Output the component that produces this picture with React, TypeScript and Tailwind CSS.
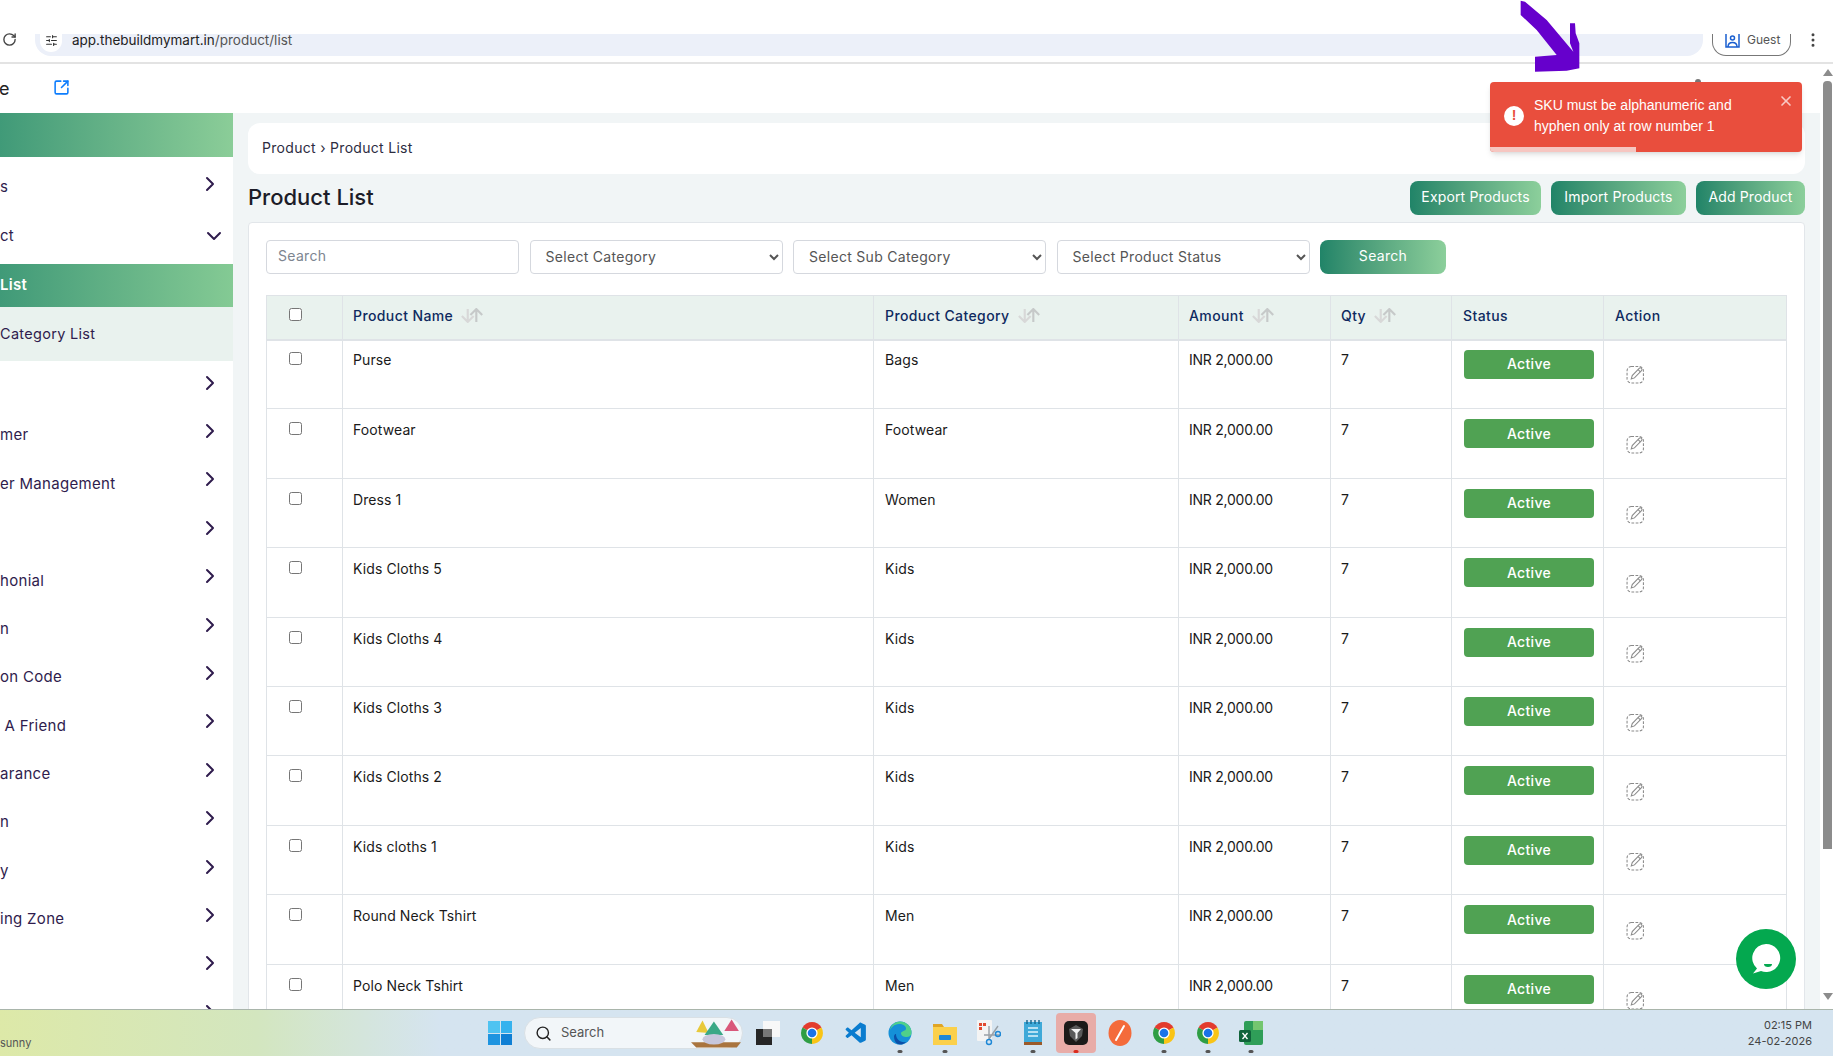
import type { ReactNode } from 'react';
import { ChevronDown, ChevronRight, EllipsisVertical, RotateCw, Search, SlidersHorizontal, SquareArrowOutUpRight, X } from 'lucide-react';
import { VscVscode } from 'react-icons/vsc';

const products = [
  { name: 'Purse', category: 'Bags' },
  { name: 'Footwear', category: 'Footwear' },
  { name: 'Dress 1', category: 'Women' },
  { name: 'Kids Cloths 5', category: 'Kids' },
  { name: 'Kids Cloths 4', category: 'Kids' },
  { name: 'Kids Cloths 3', category: 'Kids' },
  { name: 'Kids Cloths 2', category: 'Kids' },
  { name: 'Kids cloths 1', category: 'Kids' },
  { name: 'Round Neck Tshirt', category: 'Men' },
  { name: 'Polo Neck Tshirt', category: 'Men' },
];

const menuRows = ['', 'mer', 'er Management', '', 'honial', 'n', 'on Code', ' A Friend', 'arance', 'n', 'y', 'ing Zone', '', ''];

function SortIcon() {
  return (
    <svg width="23" height="15" viewBox="0 0 21 14" fill="none" strokeWidth="2" className="shrink-0">
      <path d="M7 1v12M1.5 7.5L7 13l5.500-5.500" stroke="#d8d8d8" />
      <path d="M15 13V1M9.500 6.500L15 1l5.500 5.500" stroke="#c6c9c9" />
    </svg>
  );
}

function EditIcon() {
  return (
    <svg width="19" height="19" viewBox="0 0 18 18" fill="none" stroke="#8a8a8a" strokeWidth="1">
      <rect x="1" y="1.5" width="15.5" height="15.5" rx="4" strokeDasharray="2.600 1.400" />
      <path d="M5 13.200l.9-3.200 6.600-6.800a1.500 1.500 0 0 1 2.200 2.100L8 12.200z" fill="#fff" />
      <path d="M11.500 4.400l2.100 2.100" />
    </svg>
  );
}

function ChromeIcon() {
  return (
    <svg width="24" height="24" viewBox="0 0 24 24">
      <path d="M12 12L2.500 6.500A11 11 0 0 1 21.500 6.500Z" fill="#e33b2e" />
      <path d="M12 12L2.500 6.500A11 11 0 0 0 12 23Z" fill="#2f9e44" />
      <path d="M12 12L12 23A11 11 0 0 0 21.500 6.500Z" fill="#f9c416" />
      <circle cx="12" cy="12" r="5.600" fill="#fff" />
      <circle cx="12" cy="12" r="4.300" fill="#1a73e8" />
    </svg>
  );
}

function WindowsIcon() {
  return (
    <div className="grid grid-cols-2 gap-[1px] w-[24px] h-[24px]">
      <div className="bg-[#4fc3f1]" />
      <div className="bg-[#36b2ee]" />
      <div className="bg-[#1e94e0]" />
      <div className="bg-[#0f7fd4]" />
    </div>
  );
}

function TaskItem({ className, dot, children }: { className: string; dot?: string; children: ReactNode }) {
  return (
    <div className={`relative h-[46px] flex items-center justify-center ${className}`}>
      {children}
      {dot && <span className={`absolute bottom-[3px] left-1/2 -translate-x-1/2 w-[5px] h-[3px] rounded-full ${dot}`} />}
    </div>
  );
}

function TaskbarIcons() {
  return (
    <>
      <TaskItem className="w-[44px]">
        <svg width="24" height="24" viewBox="0 0 24 24">
          <rect x="7" y="0" width="17" height="16" fill="#f8f8f8" />
          <rect x="0" y="8" width="16" height="16" fill="#262626" />
          <rect x="7" y="8" width="9" height="8" fill="#777" />
        </svg>
      </TaskItem>
      <TaskItem className="w-[44px]"><ChromeIcon /></TaskItem>
      <TaskItem className="w-[44px]"><VscVscode size={25} className="text-[#0a7ccf]" /></TaskItem>
      <TaskItem className="w-[44px]" dot="bg-[#555]">
        <svg width="24" height="24" viewBox="0 0 24 24">
          <circle cx="12" cy="12" r="11.500" fill="#1590d8" />
          <path d="M12 .5A11.500 11.500 0 0 1 23.500 12c0 3-3 4.500-6 4-3-.5-4.500-2-4.500-3.500 0-3 5-2 5-5C18 5 15 3 11 3 6 3 3 7 2 9 3 4 7 .5 12 .5z" fill="#4fd08a" />
          <path d="M8 13c0 5 4 9 10 8-2 2-4 2.500-6 2.500-3 0-6-3-6-8 0-1 1-3 2-2.500z" fill="#0b4fa8" />
        </svg>
      </TaskItem>
      <TaskItem className="w-[45px]" dot="bg-[#555]">
        <svg width="24" height="24" viewBox="0 0 24 24">
          <path d="M0 3h9l2 3H0z" fill="#e0a526" />
          <rect x="0" y="6" width="24" height="18" fill="#fbd04b" />
          <rect x="6" y="14" width="12" height="5" rx="1" fill="#1e88d6" />
        </svg>
      </TaskItem>
      <TaskItem className="w-[44px]">
        <svg width="24" height="26" viewBox="0 0 24 26">
          <rect x="0" y="0" width="15" height="21" rx="1" fill="#f4f4f4" />
          <rect x="2" y="3" width="3" height="3" fill="#e2492f" />
          <rect x="6" y="3" width="3" height="3" fill="#e2492f" />
          <rect x="2" y="7" width="3" height="3" fill="#e2492f" />
          <path d="M12 6v13M21 6L12 19M7 15h17" stroke="#9aa0a6" strokeWidth="1.400" />
          <circle cx="12" cy="22" r="2.500" fill="none" stroke="#1e88d6" strokeWidth="1.400" />
          <circle cx="21" cy="14" r="2.500" fill="none" stroke="#1e88d6" strokeWidth="1.400" />
        </svg>
      </TaskItem>
      <TaskItem className="w-[43px]" dot="bg-[#555]">
        <svg width="20" height="26" viewBox="0 0 20 26">
          <rect x="1" y="2" width="18" height="20" fill="#3fa9d8" />
          <path d="M4 0v4M8 0v4M12 0v4M16 0v4" stroke="#14648c" strokeWidth="1.400" />
          <path d="M5 8h10M5 12h10M5 16h10" stroke="#dff3fb" strokeWidth="1.600" />
          <rect x="1" y="22" width="18" height="3" fill="#9b5a2a" />
        </svg>
      </TaskItem>
      <TaskItem className="w-[44px]" dot="bg-[#d92b1f]">
        <div className="w-[40px] h-[40px] rounded bg-[#e8aca8] flex items-center justify-center">
          <svg width="24" height="24" viewBox="0 0 24 24">
            <rect width="24" height="24" rx="5" fill="#1c1a19" />
            <path d="M12 4l7 4-1 7-6 6-6-6-1-7z" fill="#5a5a5a" />
            <path d="M7 8h10l-3.500 4v5l-2 1.500V12z" fill="#f2f2f2" />
          </svg>
        </div>
      </TaskItem>
      <TaskItem className="w-[44px]">
        <svg width="24" height="26" viewBox="0 0 24 26">
          <ellipse cx="12" cy="13" rx="11.500" ry="13" fill="#f46b3b" />
          <path d="M8 20L16 6" stroke="#fff" strokeWidth="2" strokeLinecap="round" />
        </svg>
      </TaskItem>
      <TaskItem className="w-[44px]" dot="bg-[#555]"><ChromeIcon /></TaskItem>
      <TaskItem className="w-[43px]" dot="bg-[#555]"><ChromeIcon /></TaskItem>
      <TaskItem className="w-[44px]" dot="bg-[#555]">
        <svg width="24" height="24" viewBox="0 0 24 24">
          <rect x="5" y="0" width="19" height="24" rx="2" fill="#2f9e58" />
          <rect x="14" y="0" width="10" height="9" fill="#74c66f" />
          <rect x="0" y="9" width="12" height="12" rx="1.500" fill="#10633a" />
          <path d="M3.500 12l5 6M8.500 12l-5 6" stroke="#fff" strokeWidth="1.300" />
        </svg>
      </TaskItem>
    </>
  );
}

function Sidebar() {
  return (
    <aside className="w-[233px] bg-white shrink-0 overflow-hidden text-[15px] tracking-[0.3px] text-[#2f1c4d]">
      <div className="h-[44px] bg-gradient-to-r from-[#409a78] to-[#8bcd98]" />
      <div className="h-[3px]" />
      <div className="h-[48px] flex items-center justify-between pr-[11px]">
        <span className="pt-[6px]">s</span>
        <ChevronRight size={24} />
      </div>
      <div className="h-[56px] flex items-center justify-between pr-[7px]">
        <span className="pt-[1px]">ct</span>
        <ChevronDown size={24} />
      </div>
      <div className="h-[43px] flex items-center bg-gradient-to-r from-[#409a78] to-[#84ca94] text-white font-semibold">List</div>
      <div className="h-[54px] flex items-center bg-[#e9f2ee] text-[14.500px]">Category List</div>
      {menuRows.map((label, i) => (
        <div key={i} className="h-[48.400px] flex items-center justify-between pr-[11px]">
          <span className="pt-[4px] whitespace-pre">{label}</span>
          <ChevronRight size={24} className="mb-[5px] shrink-0" />
        </div>
      ))}
    </aside>
  );
}

function ProductTable() {
  return (
    <table className="w-[1520px] table-fixed border-collapse text-[14px] tracking-[0.1px] text-[#1a1a1a]">
      <colgroup>
        <col className="w-[76px]" />
        <col className="w-[531px]" />
        <col className="w-[305px]" />
        <col className="w-[152px]" />
        <col className="w-[121px]" />
        <col className="w-[152px]" />
        <col className="w-[183px]" />
      </colgroup>
      <thead>
        <tr className="h-[44px] bg-[#e9f2ee] text-left text-[#0f2a5f] tracking-[0.4px] border-b-2 border-[#dfe3e7]">
          <th className="border border-[#dfe3e7] pl-[22px] pb-[5px] font-medium"><input type="checkbox" className="block w-[13px] h-[13px]" /></th>
          <th className="border border-[#dfe3e7] pl-[10px] pb-[3px] font-medium"><div className="flex items-center gap-[7px]">Product Name <SortIcon /></div></th>
          <th className="border border-[#dfe3e7] pl-[11px] pb-[3px] font-medium"><div className="flex items-center gap-[7px]">Product Category <SortIcon /></div></th>
          <th className="border border-[#dfe3e7] pl-[10px] pb-[3px] font-medium"><div className="flex items-center gap-[7px]">Amount <SortIcon /></div></th>
          <th className="border border-[#dfe3e7] pl-[10px] pb-[3px] font-medium"><div className="flex items-center gap-[7px]">Qty <SortIcon /></div></th>
          <th className="border border-[#dfe3e7] pl-[11px] pb-[3px] font-medium">Status</th>
          <th className="border border-[#dfe3e7] pl-[11px] pb-[3px] font-medium">Action</th>
        </tr>
      </thead>
      <tbody>
        {products.map((p, i) => (
          <tr key={p.name} className="h-[69.400px] align-top">
            <td className={`border border-[#dfe3e7] pl-[22px] ${i === 0 ? 'pt-[11px]' : 'pt-[13px]'}`}><input type="checkbox" className="block w-[13px] h-[13px]" /></td>
            <td className={`border border-[#dfe3e7] pl-[10px] leading-[21px] ${i === 0 ? 'pt-[8px]' : 'pt-[10px]'}`}>{p.name}</td>
            <td className={`border border-[#dfe3e7] pl-[11px] leading-[21px] ${i === 0 ? 'pt-[8px]' : 'pt-[10px]'}`}>{p.category}</td>
            <td className={`border border-[#dfe3e7] pl-[10px] leading-[21px] tracking-[-0.25px] ${i === 0 ? 'pt-[8px]' : 'pt-[10px]'}`}>INR 2,000.00</td>
            <td className={`border border-[#dfe3e7] pl-[10px] leading-[21px] ${i === 0 ? 'pt-[8px]' : 'pt-[10px]'}`}>7</td>
            <td className={`border border-[#dfe3e7] pl-[12px] ${i === 0 ? 'pt-[9px]' : 'pt-[10px]'}`}>
              <div className="w-[130px] h-[29px] pb-[1px] rounded-[4px] bg-[#50a253] text-white font-medium tracking-[0.3px] flex items-center justify-center">Active</div>
            </td>
            <td className={`border border-[#dfe3e7] pl-[22px] ${i === 0 ? 'pt-[24px]' : 'pt-[26px]'}`}><EditIcon /></td>
          </tr>
        ))}
      </tbody>
    </table>
  );
}

export default function App() {
  return (
    <div className="relative w-[1833px] h-[1056px] overflow-hidden bg-white flex flex-col font-[Inter,sans-serif]">
      {/* browser chrome */}
      <div className="h-[64px] shrink-0 pt-[34px] border-b-2 border-[#e3e3e3] flex items-start">
        <div className="w-[35px] shrink-0 pl-[2px] -mt-[2px]">
          <RotateCw size={15} strokeWidth={2.200} className="text-[#444]" />
        </div>
        <div className="w-[1668px] h-[22px] bg-[#ecf0f9] rounded-b-[16px] flex items-start">
          <div className="ml-[5px] w-[22px] h-[18px] bg-white rounded-b-full flex justify-center">
            <SlidersHorizontal size={13} className="text-[#333]" />
          </div>
          <span className="ml-[10px] text-[13.500px] leading-[12px] text-[#222]">app.thebuildmymart.in<span className="text-[#555]">/product/list</span></span>
        </div>
        <div className="ml-[9px] w-[79px] h-[22px] border border-t-0 border-[#777] rounded-b-[14px] flex items-start pl-[12px] gap-[7px]">
          <svg width="15" height="14" viewBox="0 0 15 14" fill="none" stroke="#1a5fd0" strokeWidth="1.500">
            <path d="M1 0v13h13V0" />
            <circle cx="7.500" cy="4" r="2" />
            <path d="M3 13c0-3 2-4.500 4.500-4.500S12 10 12 13" />
          </svg>
          <span className="text-[12px] leading-[12px] text-[#555]">Guest</span>
        </div>
        <EllipsisVertical size={18} className="ml-[13px] text-[#444] -mt-[3px]" />
      </div>

      <div className="h-[945px] shrink-0 flex">
        <div className="w-[1820px] shrink-0 flex flex-col">
          <div className="h-[49px] shrink-0 flex items-center text-[18px] text-[#222]">
            <span className="-ml-[1px]">e</span>
            <SquareArrowOutUpRight size={17} className="ml-[43px] mb-[2px] text-[#0d7dfd]" strokeWidth={2.200} />
          </div>
          <div className="flex-1 min-h-0 flex overflow-hidden">
            <Sidebar />
            <main className="flex-1 bg-[#f1f5f6] px-[15px] pt-[10px] overflow-hidden">
              <div className="h-[51px] rounded-xl bg-white flex items-center pl-[14px] pb-[2px] text-[14px] tracking-[0.3px] text-[#2d2d3f]">Product › Product List</div>
              <div className="mt-[7px] mb-[7px] h-[34px] flex items-center justify-between">
                <h1 className="text-[22px] font-medium text-[#1c1c28] pb-[2px]">Product List</h1>
                <div className="flex gap-[10px] text-[14px] tracking-[0.15px] text-white">
                  <button className="w-[131px] h-[34px] pb-[3px] rounded-lg bg-gradient-to-r from-[#208468] to-[#8ccf9b]">Export Products</button>
                  <button className="w-[135px] h-[34px] pb-[3px] rounded-lg bg-gradient-to-r from-[#208468] to-[#8ccf9b]">Import Products</button>
                  <button className="w-[109px] h-[34px] pb-[3px] rounded-lg bg-gradient-to-r from-[#208468] to-[#8ccf9b]">Add Product</button>
                </div>
              </div>
              <div className="h-[900px] bg-white border border-[#e2e6ea] rounded-[4px] px-[17px] pt-[17px]">
                <div className="flex gap-[10.500px] text-[14px] tracking-[0.3px] text-[#555]">
                  <input placeholder="Search" className="w-[253px] h-[34px] border border-[#d5d8de] rounded-[4px] pl-[11px] pb-[3px] placeholder:text-[#7d8590]" />
                  <select className="w-[253px] h-[34px] border border-[#d5d8de] rounded-[4px] pl-[11px] pb-[1px] bg-white"><option>Select Category</option></select>
                  <select className="w-[253px] h-[34px] border border-[#d5d8de] rounded-[4px] pl-[11px] pb-[1px] bg-white"><option>Select Sub Category</option></select>
                  <select className="w-[253px] h-[34px] border border-[#d5d8de] rounded-[4px] pl-[11px] pb-[1px] bg-white"><option>Select Product Status</option></select>
                  <button className="w-[126px] h-[34px] pb-[3px] rounded-lg bg-gradient-to-r from-[#208468] to-[#8ccf9b] text-white">Search</button>
                </div>
                <div className="mt-[21px]"><ProductTable /></div>
              </div>
            </main>
          </div>
        </div>
        {/* page scrollbar */}
        <div className="w-[13px] shrink-0 bg-white flex flex-col items-start pl-[3px] pt-[5px]">
          <div className="w-0 h-0 border-x-[5px] border-x-transparent border-b-[7px] border-b-[#8c8c8c]" />
          <div className="w-[9px] h-[768px] mt-[5px] rounded-t-[4px] bg-[#8c8c8c]" />
          <div className="mt-[144px] w-0 h-0 border-x-[5px] border-x-transparent border-t-[7px] border-t-[#8c8c8c]" />
        </div>
      </div>

      {/* windows taskbar */}
      <div className="h-[47px] shrink-0 border-t border-[#a9b5ab] bg-gradient-to-r from-[#dde9a8] via-[#d3e6bf] via-[14%] to-[#d5e4f0] to-[24%] flex items-center relative">
        <span className="absolute left-0 top-[25px] text-[11px] text-[#555]">sunny</span>
        <div className="ml-[488px]"><WindowsIcon /></div>
        <div className="ml-[12px] w-[219px] h-[32px] rounded-full bg-[#f2f6f9] border border-[#d9e0e5] flex items-center pl-[10px] gap-[9px] relative">
          <Search size={17} className="text-[#222]" />
          <span className="text-[13px] text-[#555]">Search</span>
          <svg width="52" height="30" viewBox="0 0 50 28" className="absolute right-0 top-0">
            <path d="M1 23h48l-4 5H6z" fill="#a9743e" />
            <path d="M6 13L12 2l6 12z" fill="#e8c93a" />
            <path d="M33 12L40 1l7 11z" fill="#d9577a" />
            <path d="M14 16L23 3l9 13z" fill="#3aa886" />
            <ellipse cx="23" cy="20" rx="11" ry="5" fill="#c7c7dc" />
          </svg>
        </div>
        <div className="ml-[3px] flex items-center"><TaskbarIcons /></div>
        <div className="ml-auto pr-[21px] pb-[1px] text-right text-[11px] leading-[16px] text-[#444]">
          <div>02:15 PM</div>
          <div>24-02-2026</div>
        </div>
      </div>

      {/* toast */}
      <div className="absolute left-[1695px] top-[79px] w-[6px] h-[4px] rounded-t-full bg-[#777]" />
      <div className="absolute left-[1490px] top-[82px] w-[312px] h-[70px] rounded-[4px] bg-[#e94e3d] shadow-md overflow-hidden font-['Liberation_Sans',sans-serif] text-white text-[14px] leading-[21px]">
        <div className="flex items-center h-[67px] pl-[14px]">
          <div className="w-[20px] h-[20px] rounded-full bg-white text-[#e94e3d] font-bold flex items-center justify-center">!</div>
          <div className="ml-[10px] w-[220px]">SKU must be alphanumeric and hyphen only at row number 1</div>
        </div>
        <X size={16} strokeWidth={2.500} className="absolute right-[8px] top-[11px] text-[#f9c9c4]" />
        <div className="absolute left-0 bottom-0 w-[146px] h-[5px] bg-[#f6c6c1]" />
      </div>

      {/* annotation arrow drawn on the screenshot */}
      <svg width="60" height="72" viewBox="360 0 180 216" className="absolute left-[1520px] top-0">
        <polygon points="362,2 375,5 440,60 520,155 510,130 510,70 525,70 527,100 538,130 538,205 500,212 405,215 405,170 470,165 410,90 362,45" fill="#6600cc" />
      </svg>

      {/* chat button */}
      <div className="absolute left-[1736px] top-[929px] w-[60px] h-[60px] rounded-full bg-[#04a84f] flex items-center justify-center">
        <svg width="30" height="32" viewBox="0 0 30 32">
          <path d="M15 1a14 14 0 1 1-5 27l-8 2.500 4-5A14 14 0 0 1 15 1z" fill="#fff" />
          <path d="M13 21h8a4 3 0 0 1-8 0z" fill="#04a84f" />
        </svg>
      </div>
    </div>
  );
}
